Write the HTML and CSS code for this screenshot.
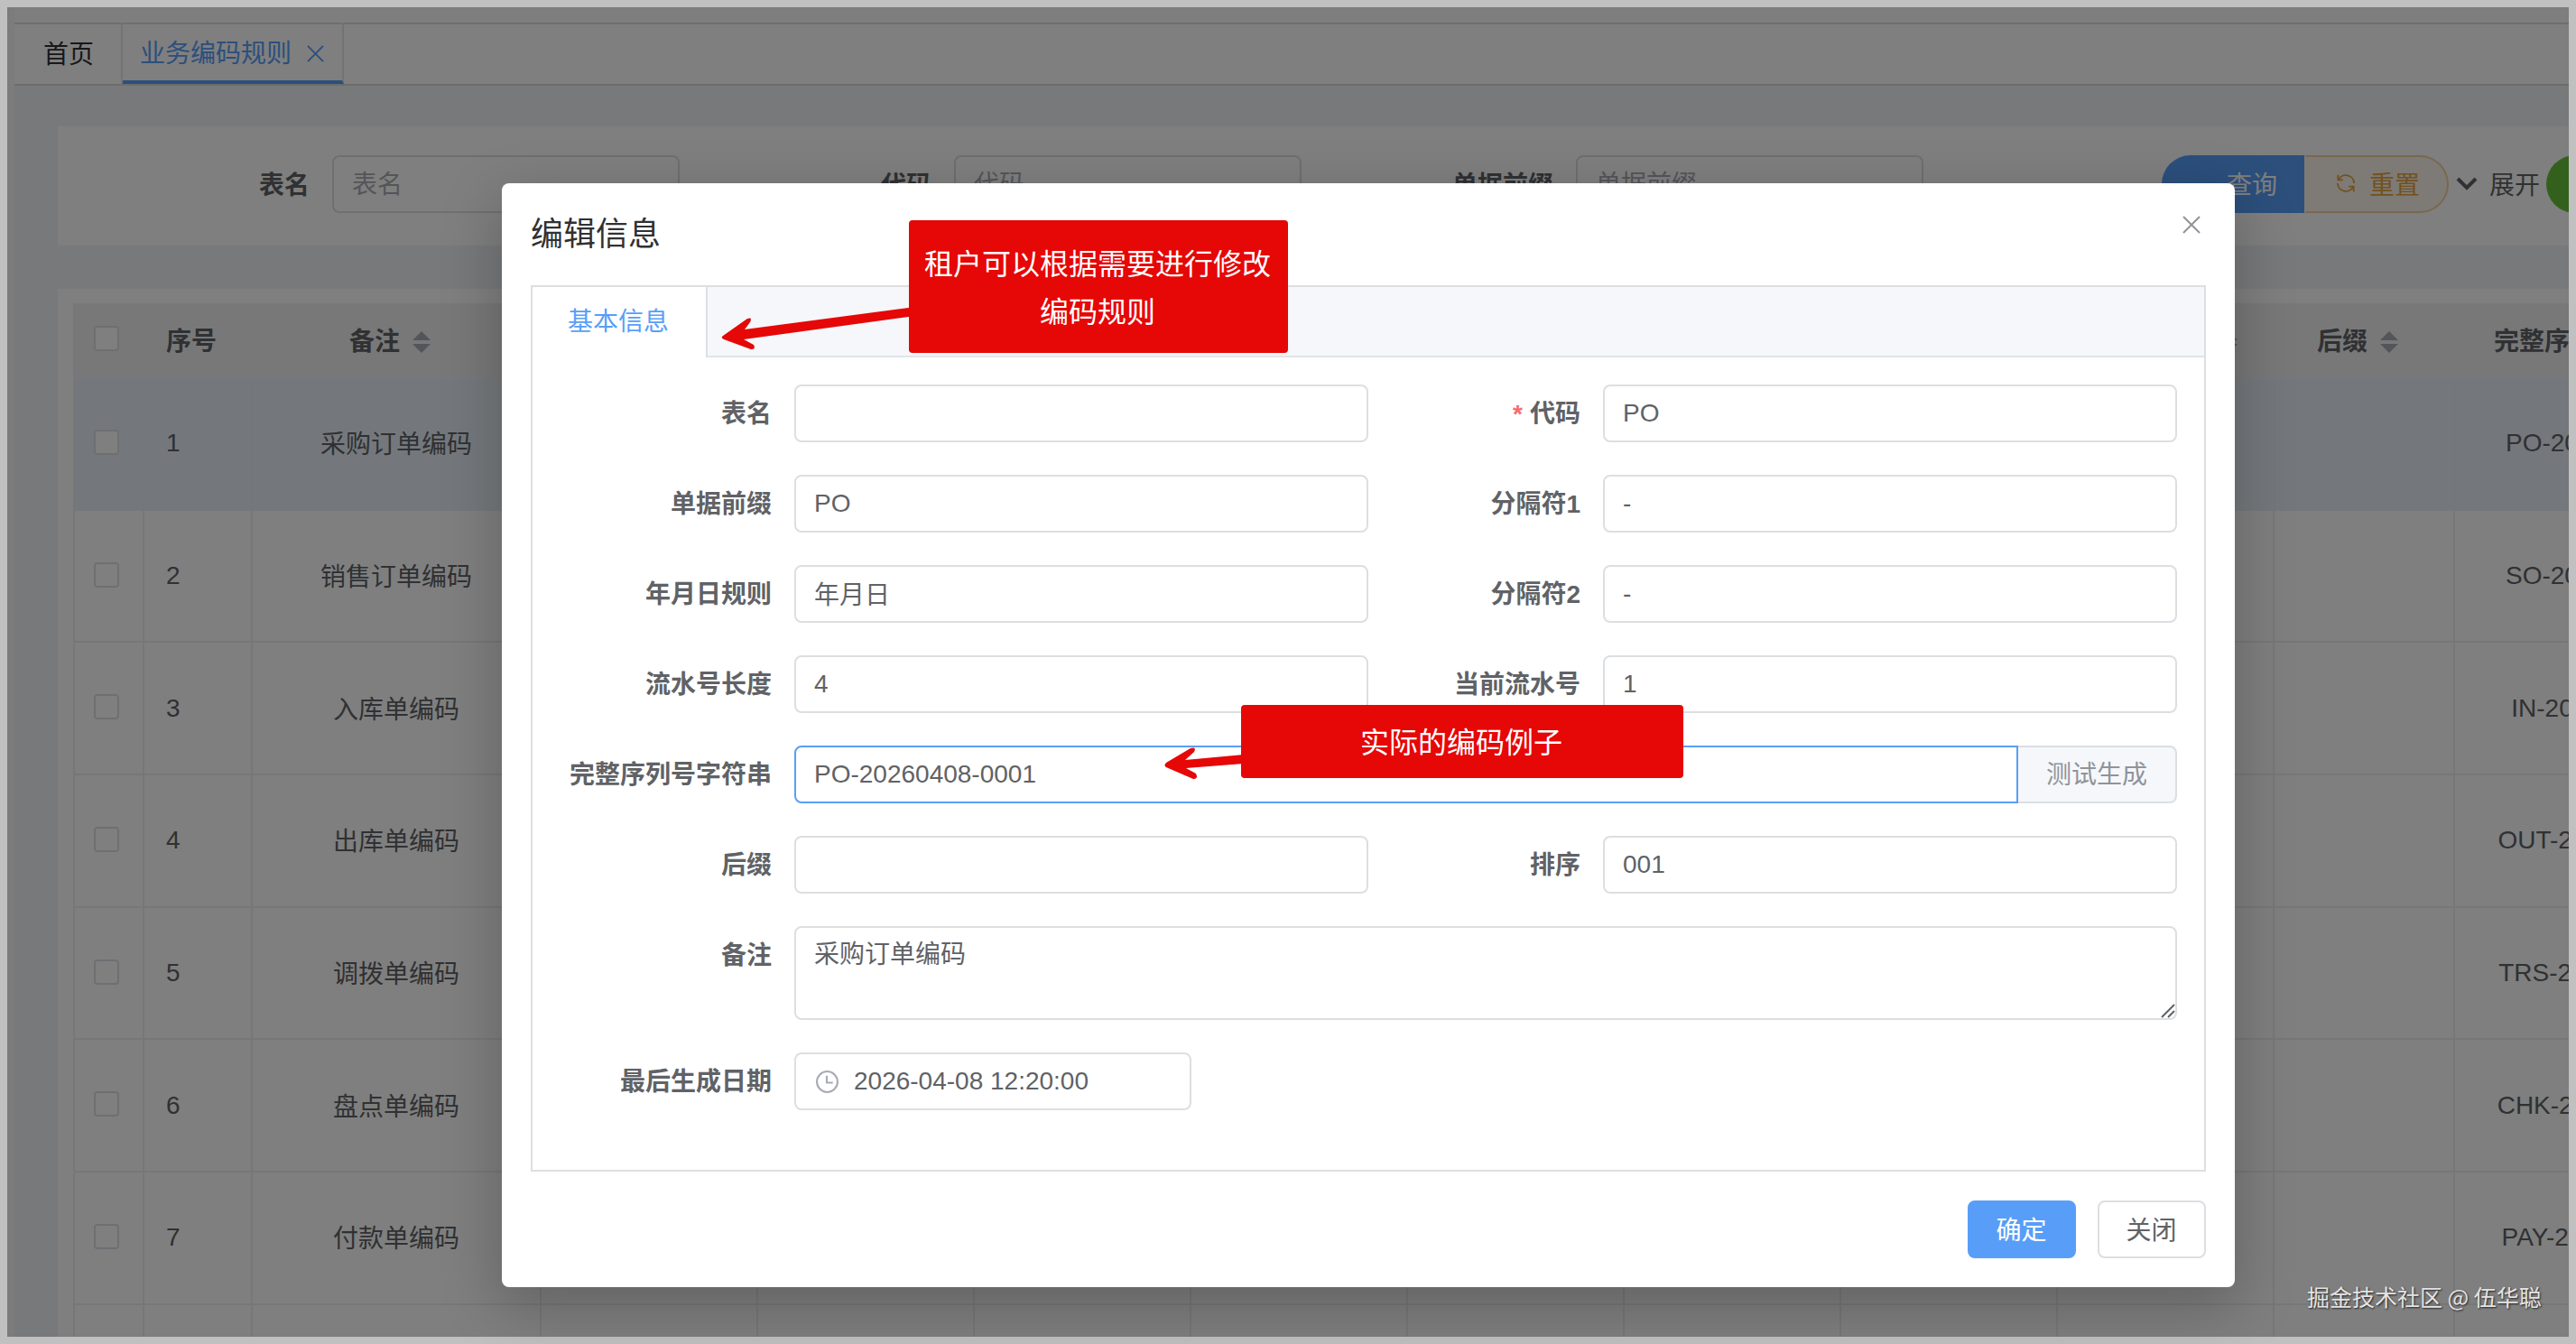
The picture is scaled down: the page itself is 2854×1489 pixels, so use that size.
FILE: index.html
```html
<!DOCTYPE html>
<html lang="zh-CN">
<head>
    <meta charset="UTF-8">
    <title>业务编码规则</title>
    <link rel="stylesheet" href="styles.css">
</head>
<body>
    <div class="page">
        <div class="tabs-bar">
            <div class="tab">首页</div>
            <div class="tab active">业务编码规则
                <svg class="tab-close" viewBox="0 0 20 20"><path d="M1 1L19 19M19 1L1 19"/></svg>
            </div>
        </div>
        <div class="card search">
            <div class="search-item"><label>表名</label><input type="text" placeholder="表名"></div>
            <div class="search-item"><label>代码</label><input type="text" placeholder="代码"></div>
            <div class="search-item"><label>单据前缀</label><input type="text" placeholder="单据前缀"></div>
            <div class="search-btns">
                <button class="btn-query">查询</button>
                <button class="btn-reset">
                    <svg viewBox="0 0 24 24"><path d="M2.5 2v6h6M3 8A10 10 0 0 1 22 12M21.500 22v-6h-6M21 16A10 10 0 0 1 2 12"/></svg>
                    重置
                </button>
                <div class="expand">
                    <svg viewBox="0 0 24 16"><path d="M2 3L12 13L22 3"/></svg>
                    展开
                </div>
                <button class="btn-add"></button>
            </div>
        </div>
        <div class="card list">
            <table id="table" class="table">
                <colgroup>
                    <col class="col-check"><col class="col-index"><col class="col-note">
                    <col class="col"><col class="col"><col class="col"><col class="col">
                    <col class="col"><col class="col"><col class="col"><col class="col">
                    <col class="col-suffix"><col class="col-full">
                </colgroup>
            </table>
        </div>
    </div>

    <div class="overlay"></div>

    <div class="dialog">
        <div class="dialog-header">
            <span class="dialog-title">编辑信息</span>
            <svg class="dialog-close" viewBox="0 0 20 20"><path d="M1 1L19 19M19 1L1 19"/></svg>
        </div>
        <div class="dialog-tabs">
            <div class="dialog-nav"><div class="dialog-tab">基本信息</div></div>
            <div class="form">
                <label>表名</label><input type="text">
                <label class="required">代码</label><input type="text" value="PO">
                <label>单据前缀</label><input type="text" value="PO">
                <label>分隔符1</label><input type="text" value="-">
                <label>年月日规则</label><input type="text" class="cn" value="年月日">
                <label>分隔符2</label><input type="text" value="-">
                <label>流水号长度</label><input type="text" value="4">
                <label>当前流水号</label><input type="text" value="1">
                <label>完整序列号字符串</label>
                <div class="group wide">
                    <input type="text" class="focus" value="PO-20260408-0001">
                    <div class="append">测试生成</div>
                </div>
                <label>后缀</label><input type="text">
                <label>排序</label><input type="text" value="001">
                <label>备注</label>
                <div class="textarea wide">采购订单编码
                    <svg viewBox="0 0 16 16"><path d="M1 15L15 1M8 15L15 8"/></svg>
                </div>
                <label>最后生成日期</label>
                <div class="date wide">
                    <svg viewBox="0 0 24 24"><circle cx="12" cy="12" r="11"/><path d="M11.500 5.500v7.500h6.500"/></svg>
                    2026-04-08 12:20:00
                </div>
            </div>
        </div>
        <div class="dialog-footer">
            <button class="btn primary">确定</button>
            <button class="btn">关闭</button>
        </div>
    </div>

    <svg class="arrows" viewBox="0 0 2854 1489">
        <path d="M1010 340.500L825 365L831 357Q834 351 828 353L801 372Q798 374 802 376L832 387Q838 387 835 382L824 376L1010 350.500Z"/>
        <path d="M1378 836L1313 842L1323 833Q1326 827 1319 829L1292 845Q1289 848 1292 850L1322 863Q1328 863 1325 857L1314 851L1378 846Z"/>
    </svg>
    <div class="callout callout-rule">租户可以根据需要进行修改<br>编码规则</div>
    <div class="callout callout-sample">实际的编码例子</div>
    <div class="watermark">掘金技术社区 @ 伍华聪</div>

    <script>
        var data = [
            ["采购订单编码", "PO-20260408-0001"],
            ["销售订单编码", "SO-20260408-0001"],
            ["入库单编码", "IN-20260408-0001"],
            ["出库单编码", "OUT-20260408-0001"],
            ["调拨单编码", "TRS-20260408-0001"],
            ["盘点单编码", "CHK-20260408-0001"],
            ["付款单编码", "PAY-20260408-0001"],
            ["", ""]
        ];
        var heads = ["备注", "", "", "", "", "", "", "", "当前流水号", "后缀", "完整序列号字符串"];
        var sort = "<span class='sort'><i class='up'></i><i class='down'></i></span>";
        var table = document.getElementById("table");
        var html = "<tr><th class='select'><span class='check'></span></th><th class='index'>序号</th>";
        for (var i = 0; i < heads.length; i++)
        {
            html += "<th>" + (heads[i] ? heads[i] + sort : "") + "</th>";
        }
        html += "</tr>";
        for (var i = 0; i < data.length; i++)
        {
            html += "<tr" + (i == 0 ? " class='current'" : "") + "><td class='select'>";
            html += data[i][0] ? "<span class='check'></span>" : "";
            html += "</td><td class='index'>" + (data[i][0] ? i + 1 : "") + "</td>";
            html += "<td class='note'>" + data[i][0] + "</td>";
            for (var j = 0; j < 9; j++)
            {
                html += "<td></td>";
            }
            html += "<td>" + data[i][1] + "</td></tr>";
        }
        table.insertAdjacentHTML("beforeend", "<tbody>" + html + "</tbody>");
    </script>
</body>
</html>
```
FILE: styles.css
```css
*
{
    box-sizing: border-box;
}
body
{
    margin: 0;
    width: 2854px;
    height: 1489px;
    overflow: hidden;
    position: relative;
    background: #c0c0c0;
    padding: 8px;
    font-family: "Liberation Sans", "Noto Sans CJK SC", sans-serif;
    font-size: 28px;
    color: #606266;
}
input,button
{
    font-family: inherit;
    font-size: 28px;
    color: #606266;
}
input
{
    height: 64px;
    border: 2px solid #dcdfe2;
    border-radius: 8px;
    background: #fff;
    padding: 0 20px;
    outline: none;
    min-width: 0;
}
input::placeholder
{
    color: #a8abb2;
}
svg
{
    fill: none;
    stroke: currentColor;
    stroke-width: 2;
}
.page
{
    width: 2838px;
    height: 1473px;
    overflow: hidden;
    background: #f0f3f6;
    border-left: 8px solid #f8f8f8;
}
.tabs-bar
{
    display: flex;
    height: 87px;
    background: #fff;
    border-top: 17px solid #fdfdfd;
    border-bottom: 2px solid #d8d8d8;
    box-shadow: inset 0 2px #dcdcdc;
}
.tab
{
    width: 120px;
    padding-left: 32px;
    line-height: 71px;
    color: #303133;
    border-right: 2px solid #e6e6e6;
}
.tab.active
{
    display: flex;
    align-items: center;
    gap: 17px;
    width: 245px;
    padding-left: 19px;
    color: #589ef8;
    border-bottom: 4px solid #589ef8;
    padding-top: 4px;
}
.tab-close
{
    width: 19px;
}
.card
{
    margin-left: 48px;
    background: #fff;
}
.search
{
    display: flex;
    height: 132px;
    margin-top: 45px;
    padding: 32px 0 0 64px;
    overflow: hidden;
}
.search-item
{
    display: flex;
    align-items: center;
    flex: none;
    height: 64px;
    width: 689px;
}
.search-item label
{
    flex: 1;
    text-align: right;
    font-weight: bold;
    padding: 0 25px 2px 0;
}
.search-item input
{
    width: 385px;
    padding: 2px 20px 0;
}
.search-item:first-child
{
    width: 625px;
}
.search-btns
{
    display: flex;
    align-items: center;
    flex: none;
    height: 64px;
    margin-left: 264px;
}
.btn-query,.btn-reset,.btn-add
{
    height: 64px;
    width: 158px;
    border: none;
    background: #589ef8;
    color: #fff;
    border-radius: 32px 0 0 32px;
    padding: 0 0 2px 42px;
}
.btn-reset
{
    display: flex;
    align-items: center;
    gap: 15px;
    width: 160px;
    padding: 0 0 2px 33px;
    color: #e6a23c;
    background: #fdf6ec;
    border: 2px solid #f3d19e;
    border-left-color: #fdf6ec;
    border-radius: 0 32px 32px 0;
}
.btn-reset svg
{
    width: 22px;
}
.expand
{
    display: flex;
    align-items: center;
    gap: 13px;
    padding-bottom: 2px;
    margin: 0 7px 0 8px;
}
.expand svg
{
    width: 24px;
    stroke-width: 4;
}
.btn-add
{
    width: 120px;
    background: #67c23a;
    border-radius: 32px;
}
.list
{
    height: 1200px;
    margin-top: 48px;
    padding: 16px 0 0 17px;
}
.table
{
    border-collapse: separate;
    border-spacing: 0;
    table-layout: fixed;
    width: 2999px;
    border-left: 2px solid #ebeef5;
}
.col-check { width: 77px; }
.col-index { width: 120px; }
.col-note { width: 320px; }
.col { width: 240px; }
.col-suffix { width: 200px; }
.col-full { width: 360px; }
th,td
{
    height: 146.67px;
    padding: 0;
    text-align: center;
    border-right: 2px solid #ebeef2;
    border-bottom: 2px solid #ebeef2;
}
th
{
    height: 83px;
    background: #f0f1f2;
    border-color: #f0f1f2;
    white-space: nowrap;
    padding-bottom: 1px;
}
.index
{
    text-align: left;
    padding-left: 24px;
}
.note
{
    padding-bottom: 2px;
}
.select
{
    padding-right: 5px;
}
.current td
{
    background: #e8f1f9;
    border-right-color: #e6eff7;
}
.check
{
    display: inline-block;
    vertical-align: middle;
    width: 28px;
    height: 28px;
    margin-bottom: 4px;
    border: 2px solid #dcdfe6;
    border-radius: 4px;
    background: #fff;
}
.sort
{
    display: inline-flex;
    flex-direction: column;
    align-items: center;
    gap: 4px;
    width: 48px;
    margin-bottom: 4px;
    vertical-align: middle;
}
.sort i
{
    border: 10px solid transparent;
}
.sort .up
{
    border-top: none;
    border-bottom-color: #a8abb2;
}
.sort .down
{
    border-bottom: none;
    border-top-color: #a8abb2;
}
.overlay
{
    position: absolute;
    left: 8px;
    top: 8px;
    width: 2838px;
    height: 1473px;
    background: rgba(0,0,0,0.5);
}
.dialog
{
    position: absolute;
    left: 556px;
    top: 203px;
    width: 1920px;
    height: 1223px;
    padding: 32px;
    background: #fff;
    border-radius: 8px;
    box-shadow: 0 20px 64px 4px rgba(0,0,0,0.22);
}
.dialog-header
{
    display: flex;
    justify-content: space-between;
    height: 81px;
}
.dialog-title
{
    font-size: 36px;
    line-height: 50px;
    color: #303133;
}
.dialog-close
{
    width: 20px;
    height: 20px;
    margin: 4px 6px 0 0;
    color: #909399;
}
.dialog-tabs
{
    height: 982px;
    border: 2px solid #dcdfe2;
}
.dialog-nav
{
    height: 78px;
    background: #f5f7fa;
    border-bottom: 2px solid #e2e5e8;
}
.dialog-tab
{
    width: 194px;
    height: 78px;
    padding-left: 39px;
    line-height: 77px;
    color: #589ef8;
    background: #fff;
    border-right: 2px solid #dcdfe2;
}
.form
{
    display: grid;
    grid-template-columns: 260px 636px 260px 636px;
    gap: 36px 0;
    padding: 30px 30px 0;
}
.form label
{
    height: 64px;
    line-height: 66px;
    padding-right: 25px;
    text-align: right;
    font-weight: bold;
}
.required::before
{
    content: "*";
    margin-right: 8px;
    color: #f56c6c;
}
.form .cn
{
    padding-bottom: 2px;
}
.wide
{
    grid-column: span 3;
}
.group
{
    display: flex;
}
.group .focus
{
    flex: 1;
    border-color: #589ef8;
    border-radius: 8px 0 0 8px;
}
.append
{
    width: 176px;
    height: 64px;
    line-height: 62px;
    text-align: center;
    color: #909399;
    background: #f5f7fa;
    border: 2px solid #dcdfe2;
    border-left: none;
    border-radius: 0 8px 8px 0;
}
.textarea
{
    position: relative;
    height: 104px;
    padding: 9px 20px;
    line-height: 42px;
    border: 2px solid #dcdfe2;
    border-radius: 8px;
}
.textarea svg
{
    position: absolute;
    right: 0;
    bottom: 0;
    width: 16px;
}
.date
{
    display: flex;
    align-items: center;
    gap: 17px;
    width: 440px;
    height: 64px;
    padding: 0 22px;
    border: 2px solid #dcdfe2;
    border-radius: 8px;
}
.date svg
{
    width: 25px;
    color: #a8abb2;
}
.dialog-footer
{
    display: flex;
    justify-content: flex-end;
    gap: 24px;
    margin-top: 32px;
}
.btn
{
    width: 120px;
    height: 64px;
    padding: 0 1px 2px 0;
    background: #fff;
    border: 2px solid #dcdfe2;
    border-radius: 8px;
}
.btn.primary
{
    background: #589ef8;
    border-color: #589ef8;
    color: #fff;
}
.arrows
{
    position: absolute;
    left: 0;
    top: 0;
    width: 2854px;
    height: 1489px;
}
.arrows path
{
    fill: #e60707;
    stroke: none;
}
.callout
{
    position: absolute;
    background: #e60707;
    border-radius: 4px;
    color: #fff;
    font-size: 32px;
    line-height: 53px;
    text-align: center;
}
.callout-rule
{
    left: 1007px;
    top: 244px;
    width: 420px;
    height: 147px;
    padding: 23px 2px 0 0;
}
.callout-sample
{
    left: 1375px;
    top: 781px;
    width: 490px;
    height: 81px;
    padding: 16px 2px 0 0;
}
.watermark
{
    position: absolute;
    left: 2556px;
    top: 1418px;
    font-family: "Noto Sans CJK SC", sans-serif;
    font-size: 25px;
    line-height: 36px;
    color: #e4e4e4;
    text-shadow: 1px 1px 2px #222;
    white-space: nowrap;
}
```
